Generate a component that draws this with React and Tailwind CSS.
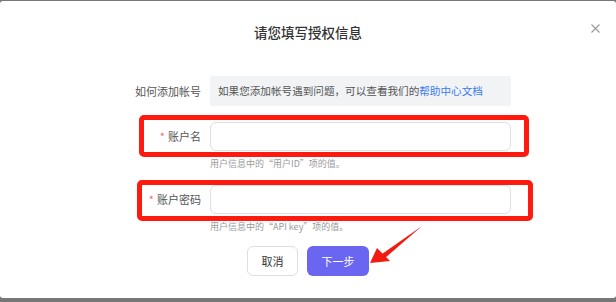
import React from 'react';

const font = { fontFamily: '"Noto Sans CJK SC", "Liberation Sans", sans-serif' };

const Field = ({ label, hint, required }) => (
  <div className="flex flex-col">
    <div className="flex items-center">
      <label className="w-[201px] text-right text-[11px] text-[#555]">
        {required && <span className="text-[#f56c6c] mr-[3px]">*</span>}
        {label}
      </label>
      <input className="ml-[9px] w-[301px] h-[29px] rounded-[6px] border border-[#dcdfe6] bg-white outline-none" />
    </div>
    <p className="ml-[210px] mt-[6px] text-[9px] leading-[14px] text-[#999]">{hint}</p>
  </div>
);

export default function App() {
  return (
    <div className="w-[616px] h-[302px] bg-[#777] pt-px overflow-hidden" style={font}>
      <div className="relative h-[297px] bg-white rounded-[3px]">
        {/* header */}
        <div className="h-[62px] flex items-start justify-center pt-[21px]">
          <h2 className="text-[13.5px] leading-[20px] font-medium text-[#333]">请您填写授权信息</h2>
        </div>
        <div className="absolute top-[23px] left-[591px] text-[#999]">
          <svg width="9" height="9" viewBox="0 0 9 9" fill="none" stroke="currentColor" strokeWidth="1.1">
            <path d="M0.5 0.5L8.5 8.5M8.5 0.5L0.5 8.5" />
          </svg>
        </div>

        {/* help row */}
        <div className="flex items-center mt-[13px]">
          <span className="w-[201px] text-right text-[11px] text-[#555]">如何添加帐号</span>
          <div className="ml-[9px] w-[301px] h-[30px] rounded-[2px] bg-[#f2f3f5] flex items-center pl-[8px] text-[10.6px] text-[#555]">
            如果您添加帐号遇到问题，可以查看我们的<span className="text-[#3a7bf0]">帮助中心文档</span>
          </div>
        </div>

        <div className="mt-[16px]">
          <Field required label="账户名" hint="用户信息中的“用户ID”项的值。" />
        </div>
        <div className="mt-[14px]">
          <Field required label="账户密码" hint="用户信息中的“API key”项的值。" />
        </div>

        {/* footer buttons */}
        <div className="flex justify-center gap-[9px] mt-[12px]">
          <button className="w-[51px] h-[30px] rounded-[6px] border border-[#dcdfe6] bg-white text-[11px] text-[#333]">取消</button>
          <button className="w-[62px] h-[30px] rounded-[6px] bg-[#6b66f2] text-[11px] text-white">下一步</button>
        </div>

        {/* annotation boxes */}
        <div className="absolute left-[139px] top-[114px] w-[390px] h-[42px] border-[5px] border-[#ff1a0f] rounded-[5px]" />
        <div className="absolute left-[137px] top-[179px] w-[396px] h-[41px] border-[5px] border-[#ff1a0f] rounded-[5px]" />

        {/* annotation arrow */}
        <svg className="absolute left-[360px] top-[218px]" width="70" height="52" viewBox="0 0 70 52">
          <path d="M62 7 L22 35 L25 39 Z" fill="#f01c12" />
          <path d="M10 44 L17 29 L30 42 Z" fill="#f01c12" />
        </svg>
      </div>
    </div>
  );
}
